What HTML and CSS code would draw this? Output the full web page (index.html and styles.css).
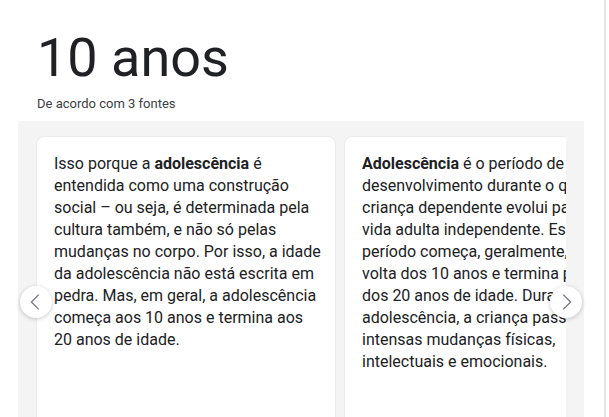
FILE: index.html
```html
<!DOCTYPE html>
<html lang="pt">
<head>
<meta charset="utf-8">
<link rel="stylesheet" href="styles.css">
</head>
<body>
<div class="panel">
  <div class="head">
    <div class="answer">10 anos</div>
    <div class="sources">De acordo com 3 fontes</div>
  </div>
  <div class="carousel">
    <div class="track">
      <div class="card">
        <p class="snippet">Isso porque a <b>adolescência</b> é entendida como uma construção social – ou seja, é determinada pela cultura também, e não só pelas mudanças no corpo. Por isso, a idade da adolescência não está escrita em pedra. Mas, em geral, a adolescência começa aos 10 anos e termina aos 20 anos de idade.</p>
        <div class="link">Adolescência – Plenarinho</div>
      </div>
      <div class="card">
        <p class="snippet"><b>Adolescência</b> é o período de desenvolvimento durante o qual a criança dependente evolui para a vida adulta independente. Esse período começa, geralmente, por volta dos 10 anos e termina por volta dos 20 anos de idade. Durante a adolescência, a criança passa por intensas mudanças físicas, intelectuais e emocionais.</p>
        <div class="link">Adolescência – Manual MSD</div>
      </div>
    </div>
    <button class="nav prev" aria-label="Anterior">
      <svg viewBox="0 0 24 24" width="22" height="22"><path d="M15 4 L7 12 L15 20" fill="none" stroke="#70757a" stroke-width="1.4"/></svg>
    </button>
    <button class="nav next" aria-label="Próximo">
      <svg viewBox="0 0 24 24" width="22" height="22"><path d="M9 4 L17 12 L9 20" fill="none" stroke="#70757a" stroke-width="1.4"/></svg>
    </button>
  </div>
</div>
</body>
</html>
```
FILE: styles.css
```css
html, body {
  margin: 0;
  padding: 0;
  background: #fff;
  height: 100%;
  overflow: hidden;
}
body {
  font-family: Roboto, "Liberation Sans", Arial, sans-serif;
  color: #202124;
}
.panel {
  width: 606px;
  height: 100%;
  border-right: 2px solid #e6e6e6;
  box-sizing: border-box;
}
.head {
  padding: 27px 0 0 37px;
}
.answer {
  font-size: 54px;
  line-height: 62px;
  color: #202124;
}
.sources {
  font-size: 13px;
  line-height: 18px;
  color: #3c4043;
  margin-top: 6px;
}
.carousel {
  position: relative;
  margin: 8px 0 0 18px;
  width: 566px;
  height: 320px;
  box-sizing: border-box;
  background: #f4f4f4;
  padding: 15px 18px 0 18px;
}
.track {
  display: flex;
  gap: 8px;
  overflow: hidden;
  height: 100%;
}
.card {
  flex: 0 0 300px;
  box-sizing: border-box;
  background: #fff;
  border: 1px solid #ebebeb;
  border-radius: 8px;
  padding: 16px 14px 16px 17px;
  height: 320px;
}
.snippet {
  margin: 0;
  font-size: 16px;
  line-height: 22px;
  color: #202124;
}
.snippet b {
  font-weight: 700;
}
.link {
  margin-top: 64px;
  color: #1a0dab;
  font-size: 16px;
  line-height: 22px;
}
.nav {
  position: absolute;
  top: 165px;
  width: 32px;
  height: 32px;
  border-radius: 50%;
  border: none;
  padding: 0;
  background: #fff;
  box-shadow: 0 1px 4px rgba(0,0,0,0.22);
  display: flex;
  align-items: center;
  justify-content: center;
}
.nav.prev { left: 2px; }
.nav.next { right: 2px; }
```
